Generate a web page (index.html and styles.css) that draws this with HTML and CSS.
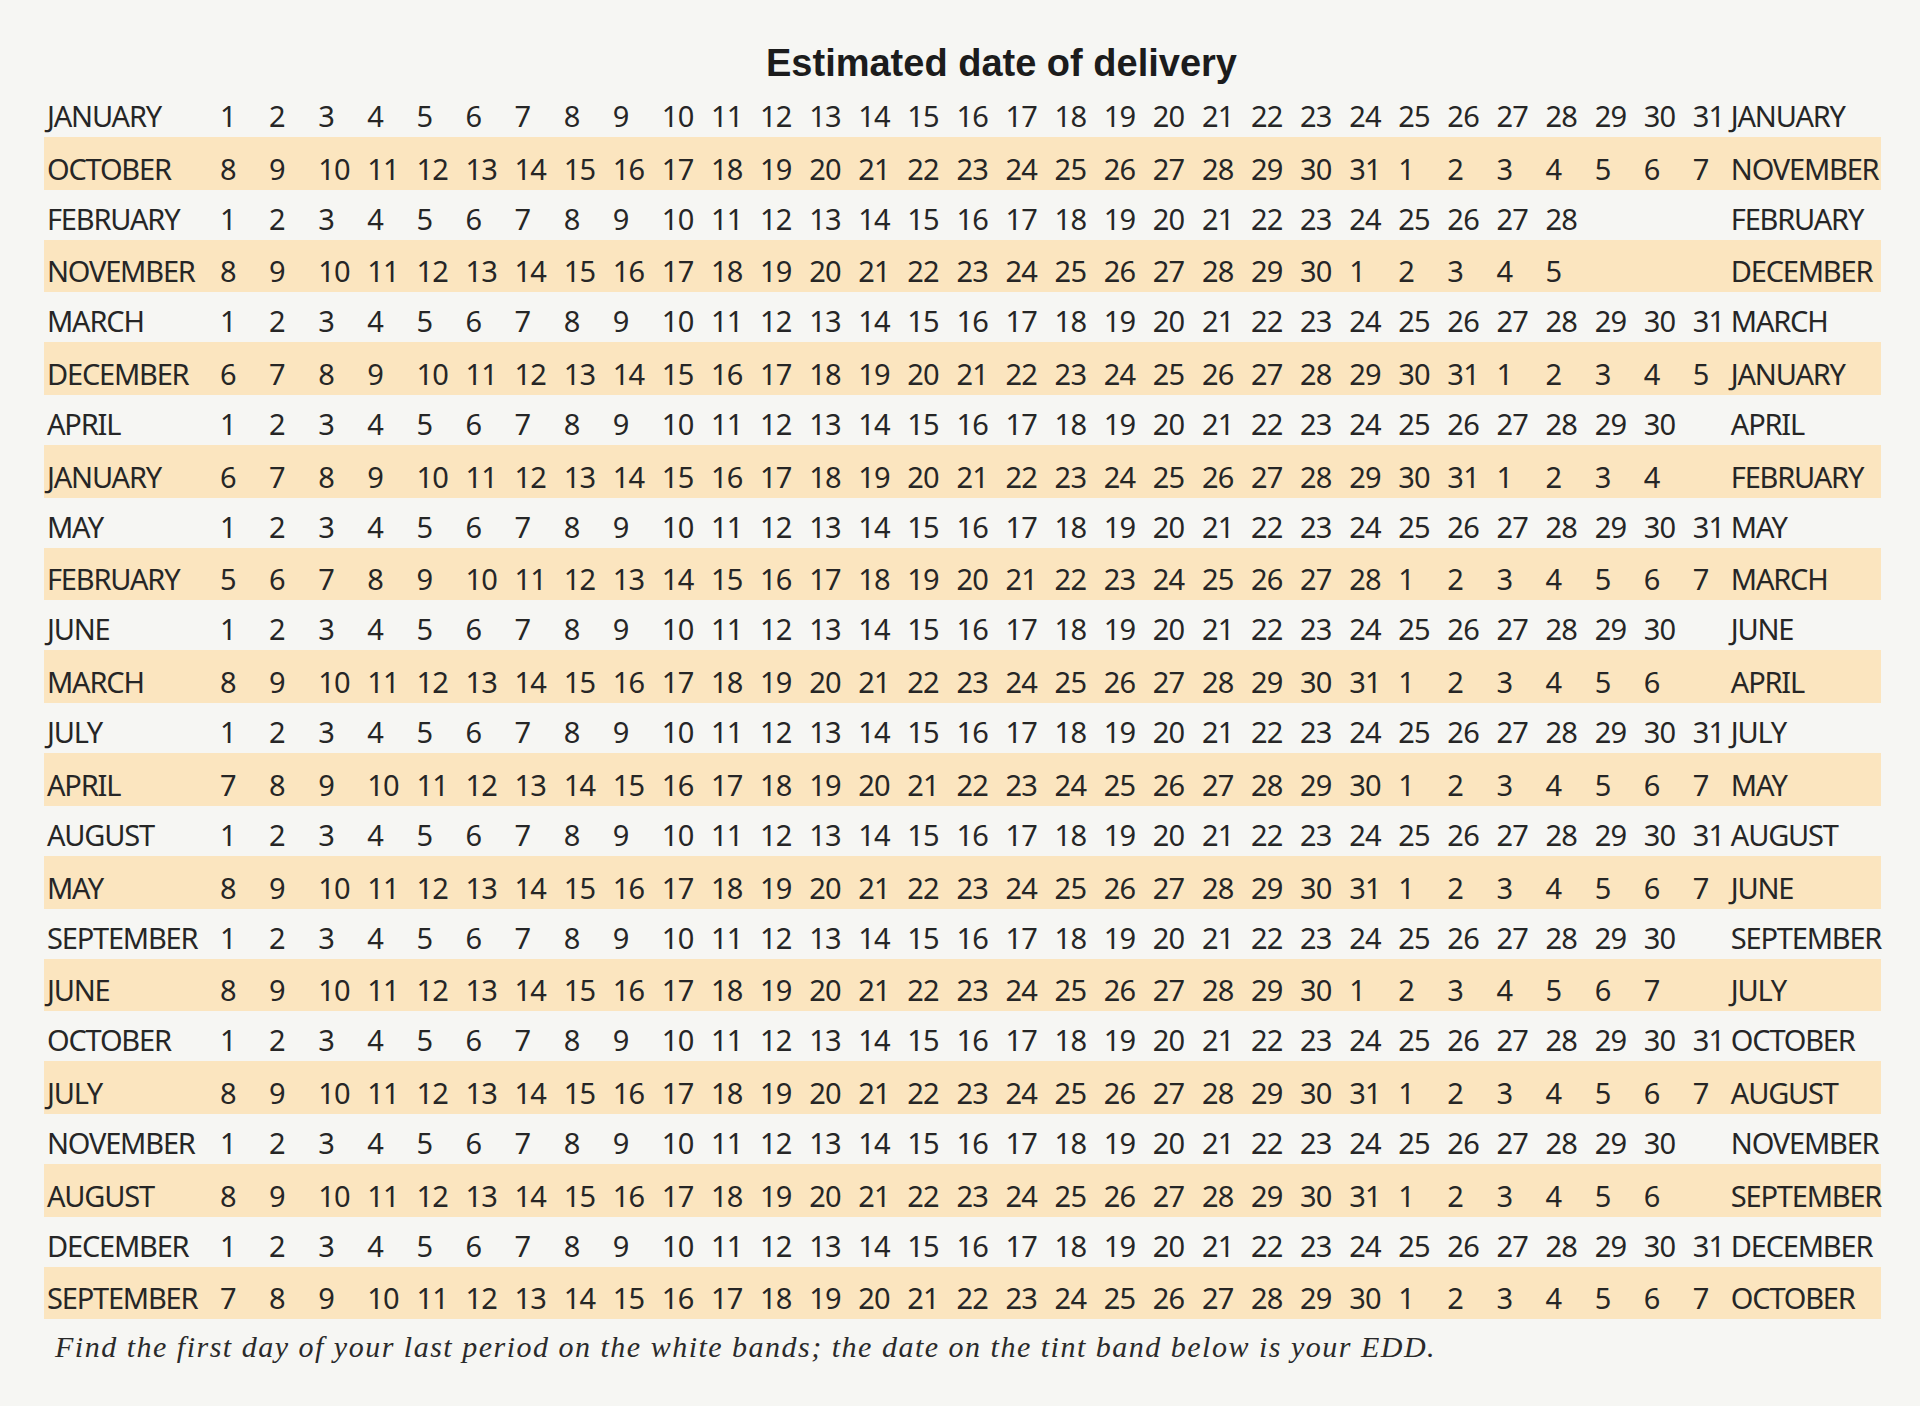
FILE: index.html
```html
<!DOCTYPE html>
<html lang="en">
<head>
<meta charset="utf-8">
<title>Estimated date of delivery</title>
<link rel="stylesheet" href="styles.css">
</head>
<body>
<main class="chart">
  <h1 class="title">Estimated date of delivery</h1>
  <div class="table">
    <div class="row lmp"><span class="month">JANUARY</span><span>1</span><span>2</span><span>3</span><span>4</span><span>5</span><span>6</span><span>7</span><span>8</span><span>9</span><span>10</span><span>11</span><span>12</span><span>13</span><span>14</span><span>15</span><span>16</span><span>17</span><span>18</span><span>19</span><span>20</span><span>21</span><span>22</span><span>23</span><span>24</span><span>25</span><span>26</span><span>27</span><span>28</span><span>29</span><span>30</span><span>31</span><span class="month end">JANUARY</span></div>
    <div class="row edd"><span class="month">OCTOBER</span><span>8</span><span>9</span><span>10</span><span>11</span><span>12</span><span>13</span><span>14</span><span>15</span><span>16</span><span>17</span><span>18</span><span>19</span><span>20</span><span>21</span><span>22</span><span>23</span><span>24</span><span>25</span><span>26</span><span>27</span><span>28</span><span>29</span><span>30</span><span>31</span><span>1</span><span>2</span><span>3</span><span>4</span><span>5</span><span>6</span><span>7</span><span class="month end">NOVEMBER</span></div>
    <div class="row lmp"><span class="month">FEBRUARY</span><span>1</span><span>2</span><span>3</span><span>4</span><span>5</span><span>6</span><span>7</span><span>8</span><span>9</span><span>10</span><span>11</span><span>12</span><span>13</span><span>14</span><span>15</span><span>16</span><span>17</span><span>18</span><span>19</span><span>20</span><span>21</span><span>22</span><span>23</span><span>24</span><span>25</span><span>26</span><span>27</span><span>28</span><span class="month end">FEBRUARY</span></div>
    <div class="row edd"><span class="month">NOVEMBER</span><span>8</span><span>9</span><span>10</span><span>11</span><span>12</span><span>13</span><span>14</span><span>15</span><span>16</span><span>17</span><span>18</span><span>19</span><span>20</span><span>21</span><span>22</span><span>23</span><span>24</span><span>25</span><span>26</span><span>27</span><span>28</span><span>29</span><span>30</span><span>1</span><span>2</span><span>3</span><span>4</span><span>5</span><span class="month end">DECEMBER</span></div>
    <div class="row lmp"><span class="month">MARCH</span><span>1</span><span>2</span><span>3</span><span>4</span><span>5</span><span>6</span><span>7</span><span>8</span><span>9</span><span>10</span><span>11</span><span>12</span><span>13</span><span>14</span><span>15</span><span>16</span><span>17</span><span>18</span><span>19</span><span>20</span><span>21</span><span>22</span><span>23</span><span>24</span><span>25</span><span>26</span><span>27</span><span>28</span><span>29</span><span>30</span><span>31</span><span class="month end">MARCH</span></div>
    <div class="row edd"><span class="month">DECEMBER</span><span>6</span><span>7</span><span>8</span><span>9</span><span>10</span><span>11</span><span>12</span><span>13</span><span>14</span><span>15</span><span>16</span><span>17</span><span>18</span><span>19</span><span>20</span><span>21</span><span>22</span><span>23</span><span>24</span><span>25</span><span>26</span><span>27</span><span>28</span><span>29</span><span>30</span><span>31</span><span>1</span><span>2</span><span>3</span><span>4</span><span>5</span><span class="month end">JANUARY</span></div>
    <div class="row lmp"><span class="month">APRIL</span><span>1</span><span>2</span><span>3</span><span>4</span><span>5</span><span>6</span><span>7</span><span>8</span><span>9</span><span>10</span><span>11</span><span>12</span><span>13</span><span>14</span><span>15</span><span>16</span><span>17</span><span>18</span><span>19</span><span>20</span><span>21</span><span>22</span><span>23</span><span>24</span><span>25</span><span>26</span><span>27</span><span>28</span><span>29</span><span>30</span><span class="month end">APRIL</span></div>
    <div class="row edd"><span class="month">JANUARY</span><span>6</span><span>7</span><span>8</span><span>9</span><span>10</span><span>11</span><span>12</span><span>13</span><span>14</span><span>15</span><span>16</span><span>17</span><span>18</span><span>19</span><span>20</span><span>21</span><span>22</span><span>23</span><span>24</span><span>25</span><span>26</span><span>27</span><span>28</span><span>29</span><span>30</span><span>31</span><span>1</span><span>2</span><span>3</span><span>4</span><span class="month end">FEBRUARY</span></div>
    <div class="row lmp"><span class="month">MAY</span><span>1</span><span>2</span><span>3</span><span>4</span><span>5</span><span>6</span><span>7</span><span>8</span><span>9</span><span>10</span><span>11</span><span>12</span><span>13</span><span>14</span><span>15</span><span>16</span><span>17</span><span>18</span><span>19</span><span>20</span><span>21</span><span>22</span><span>23</span><span>24</span><span>25</span><span>26</span><span>27</span><span>28</span><span>29</span><span>30</span><span>31</span><span class="month end">MAY</span></div>
    <div class="row edd"><span class="month">FEBRUARY</span><span>5</span><span>6</span><span>7</span><span>8</span><span>9</span><span>10</span><span>11</span><span>12</span><span>13</span><span>14</span><span>15</span><span>16</span><span>17</span><span>18</span><span>19</span><span>20</span><span>21</span><span>22</span><span>23</span><span>24</span><span>25</span><span>26</span><span>27</span><span>28</span><span>1</span><span>2</span><span>3</span><span>4</span><span>5</span><span>6</span><span>7</span><span class="month end">MARCH</span></div>
    <div class="row lmp"><span class="month">JUNE</span><span>1</span><span>2</span><span>3</span><span>4</span><span>5</span><span>6</span><span>7</span><span>8</span><span>9</span><span>10</span><span>11</span><span>12</span><span>13</span><span>14</span><span>15</span><span>16</span><span>17</span><span>18</span><span>19</span><span>20</span><span>21</span><span>22</span><span>23</span><span>24</span><span>25</span><span>26</span><span>27</span><span>28</span><span>29</span><span>30</span><span class="month end">JUNE</span></div>
    <div class="row edd"><span class="month">MARCH</span><span>8</span><span>9</span><span>10</span><span>11</span><span>12</span><span>13</span><span>14</span><span>15</span><span>16</span><span>17</span><span>18</span><span>19</span><span>20</span><span>21</span><span>22</span><span>23</span><span>24</span><span>25</span><span>26</span><span>27</span><span>28</span><span>29</span><span>30</span><span>31</span><span>1</span><span>2</span><span>3</span><span>4</span><span>5</span><span>6</span><span class="month end">APRIL</span></div>
    <div class="row lmp"><span class="month">JULY</span><span>1</span><span>2</span><span>3</span><span>4</span><span>5</span><span>6</span><span>7</span><span>8</span><span>9</span><span>10</span><span>11</span><span>12</span><span>13</span><span>14</span><span>15</span><span>16</span><span>17</span><span>18</span><span>19</span><span>20</span><span>21</span><span>22</span><span>23</span><span>24</span><span>25</span><span>26</span><span>27</span><span>28</span><span>29</span><span>30</span><span>31</span><span class="month end">JULY</span></div>
    <div class="row edd"><span class="month">APRIL</span><span>7</span><span>8</span><span>9</span><span>10</span><span>11</span><span>12</span><span>13</span><span>14</span><span>15</span><span>16</span><span>17</span><span>18</span><span>19</span><span>20</span><span>21</span><span>22</span><span>23</span><span>24</span><span>25</span><span>26</span><span>27</span><span>28</span><span>29</span><span>30</span><span>1</span><span>2</span><span>3</span><span>4</span><span>5</span><span>6</span><span>7</span><span class="month end">MAY</span></div>
    <div class="row lmp"><span class="month">AUGUST</span><span>1</span><span>2</span><span>3</span><span>4</span><span>5</span><span>6</span><span>7</span><span>8</span><span>9</span><span>10</span><span>11</span><span>12</span><span>13</span><span>14</span><span>15</span><span>16</span><span>17</span><span>18</span><span>19</span><span>20</span><span>21</span><span>22</span><span>23</span><span>24</span><span>25</span><span>26</span><span>27</span><span>28</span><span>29</span><span>30</span><span>31</span><span class="month end">AUGUST</span></div>
    <div class="row edd"><span class="month">MAY</span><span>8</span><span>9</span><span>10</span><span>11</span><span>12</span><span>13</span><span>14</span><span>15</span><span>16</span><span>17</span><span>18</span><span>19</span><span>20</span><span>21</span><span>22</span><span>23</span><span>24</span><span>25</span><span>26</span><span>27</span><span>28</span><span>29</span><span>30</span><span>31</span><span>1</span><span>2</span><span>3</span><span>4</span><span>5</span><span>6</span><span>7</span><span class="month end">JUNE</span></div>
    <div class="row lmp"><span class="month">SEPTEMBER</span><span>1</span><span>2</span><span>3</span><span>4</span><span>5</span><span>6</span><span>7</span><span>8</span><span>9</span><span>10</span><span>11</span><span>12</span><span>13</span><span>14</span><span>15</span><span>16</span><span>17</span><span>18</span><span>19</span><span>20</span><span>21</span><span>22</span><span>23</span><span>24</span><span>25</span><span>26</span><span>27</span><span>28</span><span>29</span><span>30</span><span class="month end">SEPTEMBER</span></div>
    <div class="row edd"><span class="month">JUNE</span><span>8</span><span>9</span><span>10</span><span>11</span><span>12</span><span>13</span><span>14</span><span>15</span><span>16</span><span>17</span><span>18</span><span>19</span><span>20</span><span>21</span><span>22</span><span>23</span><span>24</span><span>25</span><span>26</span><span>27</span><span>28</span><span>29</span><span>30</span><span>1</span><span>2</span><span>3</span><span>4</span><span>5</span><span>6</span><span>7</span><span class="month end">JULY</span></div>
    <div class="row lmp"><span class="month">OCTOBER</span><span>1</span><span>2</span><span>3</span><span>4</span><span>5</span><span>6</span><span>7</span><span>8</span><span>9</span><span>10</span><span>11</span><span>12</span><span>13</span><span>14</span><span>15</span><span>16</span><span>17</span><span>18</span><span>19</span><span>20</span><span>21</span><span>22</span><span>23</span><span>24</span><span>25</span><span>26</span><span>27</span><span>28</span><span>29</span><span>30</span><span>31</span><span class="month end">OCTOBER</span></div>
    <div class="row edd"><span class="month">JULY</span><span>8</span><span>9</span><span>10</span><span>11</span><span>12</span><span>13</span><span>14</span><span>15</span><span>16</span><span>17</span><span>18</span><span>19</span><span>20</span><span>21</span><span>22</span><span>23</span><span>24</span><span>25</span><span>26</span><span>27</span><span>28</span><span>29</span><span>30</span><span>31</span><span>1</span><span>2</span><span>3</span><span>4</span><span>5</span><span>6</span><span>7</span><span class="month end">AUGUST</span></div>
    <div class="row lmp"><span class="month">NOVEMBER</span><span>1</span><span>2</span><span>3</span><span>4</span><span>5</span><span>6</span><span>7</span><span>8</span><span>9</span><span>10</span><span>11</span><span>12</span><span>13</span><span>14</span><span>15</span><span>16</span><span>17</span><span>18</span><span>19</span><span>20</span><span>21</span><span>22</span><span>23</span><span>24</span><span>25</span><span>26</span><span>27</span><span>28</span><span>29</span><span>30</span><span class="month end">NOVEMBER</span></div>
    <div class="row edd"><span class="month">AUGUST</span><span>8</span><span>9</span><span>10</span><span>11</span><span>12</span><span>13</span><span>14</span><span>15</span><span>16</span><span>17</span><span>18</span><span>19</span><span>20</span><span>21</span><span>22</span><span>23</span><span>24</span><span>25</span><span>26</span><span>27</span><span>28</span><span>29</span><span>30</span><span>31</span><span>1</span><span>2</span><span>3</span><span>4</span><span>5</span><span>6</span><span class="month end">SEPTEMBER</span></div>
    <div class="row lmp"><span class="month">DECEMBER</span><span>1</span><span>2</span><span>3</span><span>4</span><span>5</span><span>6</span><span>7</span><span>8</span><span>9</span><span>10</span><span>11</span><span>12</span><span>13</span><span>14</span><span>15</span><span>16</span><span>17</span><span>18</span><span>19</span><span>20</span><span>21</span><span>22</span><span>23</span><span>24</span><span>25</span><span>26</span><span>27</span><span>28</span><span>29</span><span>30</span><span>31</span><span class="month end">DECEMBER</span></div>
    <div class="row edd"><span class="month">SEPTEMBER</span><span>7</span><span>8</span><span>9</span><span>10</span><span>11</span><span>12</span><span>13</span><span>14</span><span>15</span><span>16</span><span>17</span><span>18</span><span>19</span><span>20</span><span>21</span><span>22</span><span>23</span><span>24</span><span>25</span><span>26</span><span>27</span><span>28</span><span>29</span><span>30</span><span>1</span><span>2</span><span>3</span><span>4</span><span>5</span><span>6</span><span>7</span><span class="month end">OCTOBER</span></div>
  </div>
  <p class="note">Find the first day of your last period on the white bands; the date on the tint band below is your EDD.</p>
</main>
</body>
</html>
```
FILE: styles.css
```css
html, body {
  margin: 0;
  padding: 0;
  background: #f6f6f3;
}

body {
  width: 1920px;
  height: 1406px;
  overflow: hidden;
  color: #262626;
}

.chart {
  margin-left: 44px;
  width: 1837px;
}

.title {
  margin: 0;
  padding: 44px 0 0 722px;
  font: bold 38px/38px "Liberation Sans", Arial, sans-serif;
  color: #1c1c1c;
  white-space: nowrap;
}

.table {
  margin-top: 5px;
}

.row {
  display: grid;
  grid-template-columns: 173px repeat(30, 49.1px) 38px 1fr;
  padding-left: 3px;
  font-family: "Noto Sans", "Liberation Sans", sans-serif;
  font-size: 29px;
  letter-spacing: -0.8px;
  white-space: nowrap;
}

.row span {
  white-space: nowrap;
}

.row .month {
  letter-spacing: -1.2px;
}

.lmp {
  padding-top: 8px;
  line-height: 42px;
}

.edd {
  padding-top: 9.7px;
  line-height: 43px;
  background: #fbe5bf;
}

.end {
  grid-column: 33;
}

.note {
  margin: 12px 0 0;
  padding-left: 11px;
  font: italic 30px/32px "Liberation Serif", "Times New Roman", serif;
  letter-spacing: 1.5px;
  color: #2a2a2a;
  white-space: nowrap;
}
```
